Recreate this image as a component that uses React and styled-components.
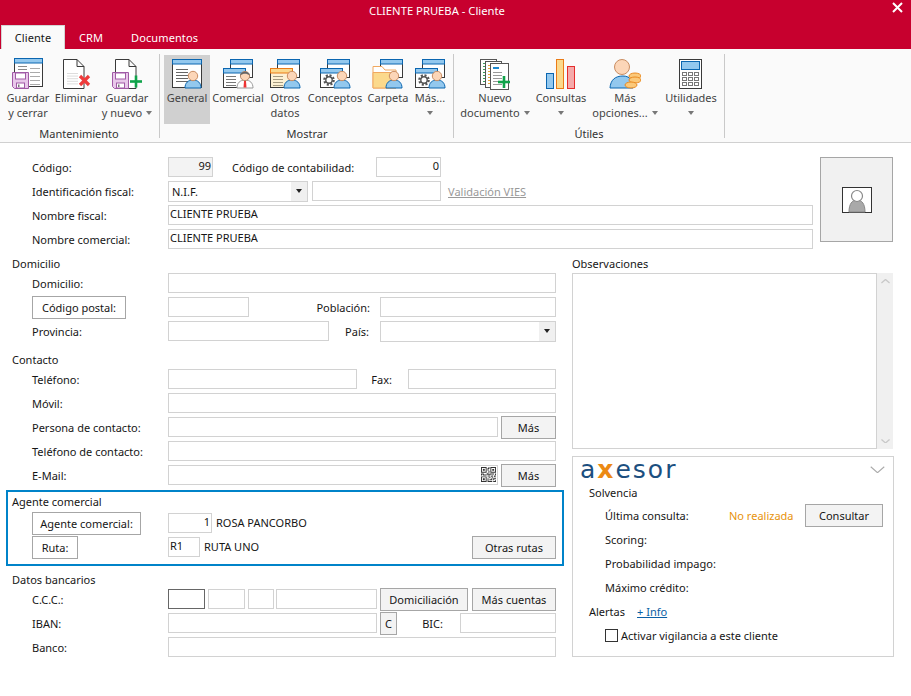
import React from "react";
import styled, { createGlobalStyle } from "styled-components";
import { BsQrCode } from "react-icons/bs";

const GlobalStyle = createGlobalStyle`
  html, body {
    margin: 0;
    padding: 0;
    background: #fff;
  }
  body {
    font-family: "Noto Sans", "DejaVu Sans", sans-serif;
    font-size: 11px;
    color: #161616;
  }
  * {
    box-sizing: border-box;
  }
`;

const Page = styled.div`
  width: 911px;
  height: 696px;
  overflow: hidden;
  background: #fff;
`;

/* ---------- title bar + tabs ---------- */
const Header = styled.header`
  height: 49px;
  background: #c7002e;
  color: #fff;
`;

const TitleBar = styled.div`
  height: 25px;
  display: flex;
  align-items: flex-start;
`;

const Title = styled.div`
  flex: 1;
  text-align: center;
  font-size: 11.25px;
  line-height: 22px;
  padding-right: 18px;
`;

const Close = styled.svg`
  width: 11px;
  height: 11px;
  margin: 2px 8px 0 0;
`;

const Tabs = styled.div`
  display: flex;
  height: 24px;
  padding-left: 1px;
`;

const Tab = styled.div`
  padding: 0 14px;
  font-size: 11px;
  letter-spacing: 0.1px;
  line-height: 26px;
  ${(p) =>
    p.$active &&
    `
    width: 64px;
    text-align: center;
    background: #fafafa;
    color: #161616;
    border: 1px solid #d4d4d4;
    border-bottom: none;
    padding: 0;
    line-height: 24px;
  `}
`;

/* ---------- ribbon ---------- */
const Ribbon = styled.div`
  height: 94px;
  display: flex;
  background: #fafafa;
  border-bottom: 1px solid #d0d0d0;
`;

const Group = styled.section`
  display: flex;
  flex-direction: column;
  padding: 6px ${(p) => p.$pr}px 0 ${(p) => p.$pl}px;
`;

const GroupButtons = styled.div`
  display: flex;
  height: 69px;
`;

const GroupName = styled.div`
  text-align: center;
  line-height: 16px;
  margin-top: 2px;
  color: #333;
`;

const Separator = styled.div`
  width: 1px;
  height: 84px;
  margin-top: 5px;
  background: #c9c9c9;
`;

const RibbonButton = styled.div`
  width: ${(p) => p.$w}px;
  display: flex;
  flex-direction: column;
  align-items: center;
  padding-top: 3px;
  line-height: 15px;
  color: #444;
  white-space: nowrap;
  background: ${(p) => (p.$on ? "#d0d0d0" : "transparent")};
  svg {
    flex: none;
  }
`;

const Caret = styled.i`
  display: inline-block;
  width: 0;
  height: 0;
  margin-left: ${(p) => (p.$solo ? 0 : 4)}px;
  vertical-align: 2px;
  border-left: 3.5px solid transparent;
  border-right: 3.5px solid transparent;
  border-top: 4px solid #777;
`;

/* ---------- form ---------- */
const Top = styled.div`
  display: flex;
  padding: 12px 0 0 32px;
`;

const TopFields = styled.div`
  width: 781px;
`;

const Photo = styled.div`
  width: 73px;
  height: 85px;
  margin: 2px 0 0 7px;
  background: #f1f1f1;
  border: 1px solid #a6a6a6;
  display: flex;
  align-items: center;
  justify-content: center;
`;

const Columns = styled.div`
  display: flex;
  padding-left: 6px;
  gap: 8px;
`;

const LeftColumn = styled.div`
  width: 558px;
`;

const RightColumn = styled.div`
  width: 322px;
`;

const Block = styled.div`
  padding: 0 8px 0 6px;
`;

const Heading = styled.div`
  line-height: 14px;
  padding-top: ${(p) => p.$top ?? 0}px;
`;

const Rows = styled.div`
  padding-left: ${(p) => p.$indent ?? 20}px;
`;

const Row = styled.div`
  display: flex;
  align-items: center;
  height: 24px;
`;

const Label = styled.div`
  width: ${(p) => p.$w ?? 136}px;
  margin-left: ${(p) => p.$ml ?? 0}px;
  text-align: ${(p) => p.$align ?? "left"};
  white-space: nowrap;
  flex: none;
`;

const Field = styled.div`
  height: 20px;
  line-height: 16px;
  padding: 0 1px;
  flex: ${(p) => (p.$w ? "none" : 1)};
  width: ${(p) => (p.$w ? `${p.$w}px` : "auto")};
  margin-left: ${(p) => p.$ml ?? 0}px;
  text-align: ${(p) => (p.$right ? "right" : "left")};
  background: ${(p) => (p.$gray ? "#f3f3f3" : "#fff")};
  border: 1px solid ${(p) => (p.$focus ? "#666" : "#d2d2d2")};
  white-space: nowrap;
  position: relative;
  svg {
    position: absolute;
    right: 1px;
    top: 1px;
  }
`;

const Select = styled.div`
  height: 21px;
  flex: none;
  width: ${(p) => p.$w}px;
  margin-left: ${(p) => p.$ml ?? 0}px;
  display: flex;
  align-items: center;
  padding-left: 3px;
  border: 1px solid #d2d2d2;
  justify-content: space-between;
`;

const SelectArrow = styled.div`
  width: 16px;
  height: 19px;
  background: #f0f0f0;
  display: flex;
  align-items: center;
  justify-content: center;
  i {
    border-top-color: #222;
    margin: 0;
  }
`;

const Button = styled.div`
  height: 23px;
  flex: none;
  width: ${(p) => p.$w}px;
  margin-left: ${(p) => p.$ml ?? 0}px;
  background: ${(p) => (p.$plain ? "#fff" : "#f3f3f3")};
  border: 1px solid #a6a6a6;
  text-align: center;
  line-height: 21px;
  white-space: nowrap;
`;

const Plain = styled.div`
  margin-left: ${(p) => p.$ml ?? 0}px;
  white-space: nowrap;
  margin-top: -2px;
`;

const VatLink = styled.div`
  margin-left: 7px;
  color: #999;
  text-decoration: underline;
`;

const AgentBox = styled.div`
  margin-top: 3px;
  height: 76px;
  border: 2px solid #0083c9;
  padding: 3px 0 0 4px;
`;

const AgentRows = styled.div`
  padding: 2px 6px 0 20px;
`;

const Spacer = styled.div`
  flex: 1;
`;

/* ---------- right column ---------- */
const Notes = styled.div`
  display: flex;
  margin-top: 2px;
  height: 176px;
`;

const NotesArea = styled.div`
  width: 305px;
  border: 1px solid #d2d2d2;
`;

const ScrollTrack = styled.div`
  width: 16px;
  background: #f0f0f0;
  display: flex;
  flex-direction: column;
  justify-content: space-between;
  align-items: center;
  padding: 6px 0;
`;

const Panel = styled.div`
  margin-top: 7px;
  height: 201px;
  border: 1px solid #d2d2d2;
  padding-left: 16px;
`;

const PanelTop = styled.div`
  height: 27px;
  margin-left: -9px;
  display: flex;
  align-items: center;
  justify-content: space-between;
  padding: 0 8px 2px 0;
`;

const Logo = styled.div`
  font-family: "DejaVu Sans", sans-serif;
  font-size: 25px;
  line-height: 24px;
  letter-spacing: 2px;
  color: #1c4f80;
  span {
    color: #ec8a14;
    font-weight: 700;
  }
`;

const SubHeading = styled.div`
  height: 19px;
  line-height: 18px;
`;

const Orange = styled.div`
  color: #e8930c;
  width: 76px;
  flex: none;
`;

const InfoLink = styled.div`
  margin-left: 12px;
  color: #0b5fa5;
  text-decoration: underline;
`;

const Check = styled.div`
  width: 13px;
  height: 13px;
  border: 1px solid #333;
  margin-right: 3px;
  flex: none;
`;

/* ---------- drawn icons ---------- */
const INK = "#3a3a3a";
const BLUE = "#0b66b0";
const SKY = "#93c8ee";

const Icon = ({ children }) => (
  <svg width="32" height="32" viewBox="0 0 32 32">
    {children}
  </svg>
);

const Win = ({ x, y, w, h, head = SKY, edge = BLUE, fill = "#fff" }) => (
  <g>
    <rect x={x} y={y} width={w} height={h} fill={fill} stroke={INK} />
    <rect x={x} y={y} width={w} height={4.5} fill={head} stroke={edge} />
  </g>
);

const Lines = ({ x, y, w, n = 4, gap = 3, color = "#8a8a8a" }) => (
  <g stroke={color}>
    {Array.from({ length: n }).map((_, i) => (
      <line key={i} x1={x} x2={x + w} y1={y + i * gap + 0.5} y2={y + i * gap + 0.5} />
    ))}
  </g>
);

const Person = ({ cx }) => (
  <g>
    <path
      d={`M${cx - 8} 30 C${cx - 8} 25 ${cx - 5} 22 ${cx} 22 C${cx + 5} 22 ${cx + 8} 25 ${cx + 8} 30 Z`}
      fill={SKY}
      stroke={BLUE}
    />
    <circle cx={cx} cy={18} r={4.7} fill="#fcd6b8" stroke="#c98d62" />
  </g>
);

const Gear = ({ cx, cy }) => (
  <g fill="none" stroke="#555">
    <circle cx={cx} cy={cy} r={4.6} strokeWidth={2.4} strokeDasharray="2 1.6" />
    <circle cx={cx} cy={cy} r={3.2} strokeWidth={1.4} />
  </g>
);

const Floppy = ({ x }) => (
  <g>
    <path
      d={`M${x + 0.5} 14.5 H${x + 16.5} V30.5 H${x + 2.5} L${x + 0.5} 28.5 Z`}
      fill="#e8c8ea"
      stroke="#a05aa6"
    />
    <rect x={x + 3.5} y={15} width={10} height={6} fill="#fff" stroke="#a05aa6" />
    <rect x={x + 4.5} y={25} width={8} height={5} fill="#fff" stroke="#a05aa6" />
    <rect x={x + 6} y={26.5} width={1.5} height={2.5} fill="#777" />
  </g>
);

const Doc = ({ x, w = 21 }) => (
  <path
    d={`M${x + 0.5} 1.5 H${x + w - 7} L${x + w} 8.5 V30.5 H${x + 0.5} Z M${x + w - 7} 1.5 V8.5 H${x + w}`}
    fill="#fff"
    stroke={INK}
  />
);

const Plus = ({ cx, cy, r = 6 }) => (
  <g stroke="#10a34a" strokeWidth={2.6}>
    <line x1={cx - r} x2={cx + r} y1={cy} y2={cy} />
    <line x1={cx} x2={cx} y1={cy - r} y2={cy + r} />
  </g>
);

const TwoWindows = ({ front }) => (
  <>
    <Win x={8.5} y={1.5} w={22} h={18} />
    {front}
  </>
);

const icons = {
  saveClose: (
    <Icon>
      <Win x={2.5} y={0.5} w={28} h={28} />
      <Lines x={6} y={8} w={9} n={2} gap={3} />
      <Lines x={18} y={10} w={10} n={5} gap={4} color="#aaa" />
      <Floppy x={0} />
    </Icon>
  ),
  remove: (
    <Icon>
      <Doc x={3} />
      <Lines x={7} y={15} w={11} n={5} gap={2.6} color="#ddd" />
      <g stroke="#ee3b3b" strokeWidth={3.2}>
        <line x1={20} y1={18} x2={29} y2={27} />
        <line x1={29} y1={18} x2={20} y2={27} />
      </g>
    </Icon>
  ),
  saveNew: (
    <Icon>
      <Doc x={4} />
      <Floppy x={1} />
      <Plus cx={25} cy={23.5} />
    </Icon>
  ),
  general: (
    <Icon>
      <Win x={1.5} y={1.5} w={29} h={28} />
      <Lines x={5} y={11} w={12} n={5} gap={3} color="#666" />
      <Person cx={22} />
    </Icon>
  ),
  commercial: (
    <Icon>
      <TwoWindows
        front={
          <>
            <Win x={1.5} y={10.5} w={22} h={19} />
            <Lines x={4} y={18} w={10} n={4} gap={3} color="#777" />
          </>
        }
      />
      <path d="M15 30 C15 25 18 22 23 22 C28 22 31 25 31 30 Z" fill="#fff" stroke="#999" />
      <path d="M22 23 H24 L24.5 29.5 H21.5 Z" fill="#e33" />
      <circle cx={23} cy={18} r={4.6} fill="#fcd6b8" stroke="#b98a6a" />
      <path d="M18.3 17.5 C18 12.5 28 12.5 27.7 17.5 C25 15 21 15 18.3 17.5 Z" fill="#666" />
    </Icon>
  ),
  other: (
    <Icon>
      <TwoWindows
        front={
          <>
            <Win x={1.5} y={10.5} w={22} h={19} head="#fbd98c" edge="#ea7b17" fill="#fdf1d4" />
            <Lines x={4} y={18} w={10} n={4} gap={3} color="#a59a80" />
          </>
        }
      />
      <Person cx={23} />
    </Icon>
  ),
  concepts: (
    <Icon>
      <TwoWindows
        front={
          <>
            <Win x={1.5} y={10.5} w={22} h={19} />
            <Gear cx={10} cy={22} />
          </>
        }
      />
      <Person cx={23} />
    </Icon>
  ),
  folder: (
    <Icon>
      <TwoWindows
        front={
          <>
            <path d="M1 8.5 H10 L13 12 H24 V30 H1 Z" fill="#fff" stroke="#f0a860" />
            <path d="M1 14.5 H24 V30 H1 Z" fill="#fbd98c" stroke="#f0a860" />
          </>
        }
      />
      <Person cx={22} />
    </Icon>
  ),
  newDoc: (
    <Icon>
      <rect x={1.5} y={1.5} width={16} height={25} fill="#fff" stroke="#555" />
      <Lines x={4} y={5} w={10} n={7} gap={3} color="#3b9b5a" />
      <rect x={6.5} y={3.5} width={16} height={26} fill="#fff" stroke="#555" />
      <Lines x={9} y={7} w={10} n={7} gap={3} color="#e8a63c" />
      <rect x={11.5} y={5.5} width={18} height={26} fill="#fff" stroke="#555" />
      <rect x={14} y={9} width={6} height={2} fill="#1f8ad0" />
      <Lines x={14} y={14} w={9} n={5} gap={3} color="#9a9a9a" />
      <Plus cx={25} cy={24} />
    </Icon>
  ),
  charts: (
    <Icon>
      <rect x={1.5} y={15.5} width={7} height={15} fill={SKY} stroke={BLUE} />
      <rect x={11.5} y={1.5} width={7} height={29} fill="#fbd98c" stroke="#ea7b17" />
      <rect x={22.5} y={8.5} width={7} height={22} fill="#f5aaaa" stroke="#e52d2d" />
    </Icon>
  ),
  options: (
    <Icon>
      <path d="M1 30 C1.5 22 6 18 14 18 C22 18 24 24 24 30 Z" fill={SKY} stroke={BLUE} />
      <circle cx={13} cy={9} r={7.5} fill="#fcd6b8" stroke="#c98d62" />
      {[18, 22, 27].map((cy, i) => (
        <ellipse key={cy} cx={i === 2 ? 22 : 26} cy={cy} rx={6} ry={3} fill="#fbc97a" stroke="#ea8a20" />
      ))}
    </Icon>
  ),
  calculator: (
    <Icon>
      <rect x={4.5} y={1.5} width={22} height={29} fill="#fff" stroke={INK} />
      <rect x={6.5} y={3.5} width={18} height={8} fill={SKY} stroke={BLUE} />
      {[14, 19, 24].map((y) =>
        [7, 13, 19].map((x) => (
          <rect key={`${x}-${y}`} x={x + 0.5} y={y + 0.5} width={4} height={3} fill="#fff" stroke="#777" />
        ))
      )}
    </Icon>
  ),
};

const Chevron = ({ up, size = 9, weight = 1.4, color = "#c8c8c8" }) => (
  <svg width={size} height={size * 0.5} viewBox="0 0 10 5">
    <polyline points={up ? "0.5,4.5 5,0.5 9.5,4.5" : "0.5,0.5 5,4.5 9.5,0.5"} fill="none" stroke={color} strokeWidth={weight} />
  </svg>
);

const mantenimiento = [
  { w: 48, icon: "saveClose", text: ["Guardar", "y cerrar"] },
  { w: 48, icon: "remove", text: ["Eliminar"] },
  { w: 54, icon: "saveNew", text: ["Guardar", "y nuevo"], caret: true },
];

const mostrar = [
  { w: 46, icon: "general", text: ["General"], on: true },
  { w: 56, icon: "commercial", text: ["Comercial"] },
  { w: 38, icon: "other", text: ["Otros", "datos"] },
  { w: 62, icon: "concepts", text: ["Conceptos"] },
  { w: 44, icon: "folder", text: ["Carpeta"] },
  { w: 40, icon: "concepts", text: ["Más..."], caret: true },
];

const utiles = [
  { w: 76, icon: "newDoc", text: ["Nuevo", "documento"], caret: true },
  { w: 56, icon: "charts", text: ["Consultas"], caret: true },
  { w: 72, icon: "options", text: ["Más", "opciones..."], caret: true },
  { w: 60, icon: "calculator", text: ["Utilidades"], caret: true },
];

const RibbonItem = ({ w, icon, text, caret, on }) => (
  <RibbonButton $w={w} $on={on}>
    {icons[icon]}
    <div>{text[0]}</div>
    {text[1] ? (
      <div>
        {text[1]}
        {caret && <Caret />}
      </div>
    ) : (
      caret && (
        <div>
          <Caret $solo />
        </div>
      )
    )}
  </RibbonButton>
);

const RibbonGroup = ({ name, items, pl, pr }) => (
  <Group $pl={pl} $pr={pr}>
    <GroupButtons>
      {items.map((it) => (
        <RibbonItem key={it.text.join(" ")} {...it} />
      ))}
    </GroupButtons>
    <GroupName>{name}</GroupName>
  </Group>
);

export default function App() {
  return (
    <Page>
      <GlobalStyle />
      <Header>
        <TitleBar>
          <Title>CLIENTE PRUEBA - Cliente</Title>
          <Close viewBox="0 0 11 11">
            <path d="M1 1 L10 10 M10 1 L1 10" stroke="#fff" strokeWidth="2" />
          </Close>
        </TitleBar>
        <Tabs>
          <Tab $active>Cliente</Tab>
          <Tab>CRM</Tab>
          <Tab>Documentos</Tab>
        </Tabs>
      </Header>

      <Ribbon>
        <RibbonGroup name="Mantenimiento" items={mantenimiento} pl={4} pr={5} />
        <Separator />
        <RibbonGroup name="Mostrar" items={mostrar} pl={4} pr={3} />
        <Separator />
        <RibbonGroup name="Útiles" items={utiles} pl={3} pr={3} />
        <Separator />
      </Ribbon>

      <Top>
        <TopFields>
          <Row>
            <Label>Código:</Label>
            <Field $w={45} $gray $right>
              99
            </Field>
            <Label $w={125} $ml={19}>
              Código de contabilidad:
            </Label>
            <Field $w={65} $ml={19} $right>
              0
            </Field>
          </Row>
          <Row>
            <Label>Identificación fiscal:</Label>
            <Select $w={140}>
              N.I.F.
              <SelectArrow>
                <Caret />
              </SelectArrow>
            </Select>
            <Field $w={129} $ml={4} />
            <VatLink>Validación VIES</VatLink>
          </Row>
          <Row>
            <Label>Nombre fiscal:</Label>
            <Field>CLIENTE PRUEBA</Field>
          </Row>
          <Row>
            <Label>Nombre comercial:</Label>
            <Field>CLIENTE PRUEBA</Field>
          </Row>
        </TopFields>
        <Photo>
          <svg width="30" height="26" viewBox="0 0 30 26">
            <rect x="0.5" y="0.5" width="29" height="25" fill="#fff" stroke="#333" />
            <path d="M7 25 C7 17 10 13 15 13 C20 13 23 17 23 25 Z" fill="#a9a9a9" stroke="#888" />
            <circle cx="15" cy="9" r="5.5" fill="#fff" stroke="#888" strokeWidth="1.2" />
          </svg>
        </Photo>
      </Top>

      <Columns>
        <LeftColumn>
          <Block>
            <Heading $top={6}>Domicilio</Heading>
            <Rows>
              <Row>
                <Label>Domicilio:</Label>
                <Field />
              </Row>
              <Row>
                <Button $w={94} $plain>
                  Código postal:
                </Button>
                <Field $w={81} $ml={42} />
                <Label $w={121} $align="right">
                  Población:
                </Label>
                <Field $ml={10} />
              </Row>
              <Row>
                <Label>Provincia:</Label>
                <Field $w={161} />
                <Label $w={40} $align="right">
                  País:
                </Label>
                <Select $w={176} $ml={11}>
                  <span />
                  <SelectArrow>
                    <Caret />
                  </SelectArrow>
                </Select>
              </Row>
            </Rows>

            <Heading $top={10}>Contacto</Heading>
            <Rows>
              <Row>
                <Label>Teléfono:</Label>
                <Field $w={189} />
                <Label $w={35} $align="right">
                  Fax:
                </Label>
                <Field $ml={16} />
              </Row>
              <Row>
                <Label>Móvil:</Label>
                <Field />
              </Row>
              <Row>
                <Label>Persona de contacto:</Label>
                <Field />
                <Button $w={55} $ml={3}>
                  Más
                </Button>
              </Row>
              <Row>
                <Label>Teléfono de contacto:</Label>
                <Field />
              </Row>
              <Row>
                <Label>E-Mail:</Label>
                <Field>
                  <BsQrCode size={15} color="#333" />
                </Field>
                <Button $w={55} $ml={3}>
                  Más
                </Button>
              </Row>
            </Rows>
          </Block>

          <AgentBox>
            <Heading>Agente comercial</Heading>
            <AgentRows>
              <Row>
                <Button $w={109} $plain>
                  Agente comercial:
                </Button>
                <Field $w={44} $ml={27} $right>
                  1
                </Field>
                <Plain $ml={4}>ROSA PANCORBO</Plain>
              </Row>
              <Row>
                <Button $w={46} $plain>
                  Ruta:
                </Button>
                <Field $w={32} $ml={90}>
                  R1
                </Field>
                <Plain $ml={4}>RUTA UNO</Plain>
                <Spacer />
                <Button $w={84}>Otras rutas</Button>
              </Row>
            </AgentRows>
          </AgentBox>

          <Block>
            <Heading $top={7}>Datos bancarios</Heading>
            <Rows>
              <Row>
                <Label>C.C.C.:</Label>
                <Field $w={37} $focus />
                <Field $w={37} $ml={3} />
                <Field $w={26} $ml={3} />
                <Field $w={101} $ml={2} />
                <Button $w={88} $ml={3}>
                  Domiciliación
                </Button>
                <Button $w={84} $ml={4}>
                  Más cuentas
                </Button>
              </Row>
              <Row>
                <Label>IBAN:</Label>
                <Field $w={209} />
                <Button $w={17} $ml={3}>
                  C
                </Button>
                <Label $w={46} $align="right">
                  BIC:
                </Label>
                <Field $ml={17} />
              </Row>
              <Row>
                <Label>Banco:</Label>
                <Field />
              </Row>
            </Rows>
          </Block>
        </LeftColumn>

        <RightColumn>
          <Heading $top={6}>Observaciones</Heading>
          <Notes>
            <NotesArea />
            <ScrollTrack>
              <Chevron up />
              <Chevron />
            </ScrollTrack>
          </Notes>
          <Panel>
            <PanelTop>
              <Logo>
                a<span>x</span>esor
              </Logo>
              <Chevron size={15} weight={0.7} color="#aaa" />
            </PanelTop>
            <SubHeading>Solvencia</SubHeading>
            <Rows $indent={16}>
              <Row>
                <Label $w={124}>Última consulta:</Label>
                <Orange>No realizada</Orange>
                <Button $w={78}>Consultar</Button>
              </Row>
              <Row>
                <Label>Scoring:</Label>
              </Row>
              <Row>
                <Label>Probabilidad impago:</Label>
              </Row>
              <Row>
                <Label>Máximo crédito:</Label>
              </Row>
            </Rows>
            <Row>
              <span>Alertas</span>
              <InfoLink>+ Info</InfoLink>
            </Row>
            <Rows $indent={16}>
              <Row>
                <Check />
                Activar vigilancia a este cliente
              </Row>
            </Rows>
          </Panel>
        </RightColumn>
      </Columns>
    </Page>
  );
}
